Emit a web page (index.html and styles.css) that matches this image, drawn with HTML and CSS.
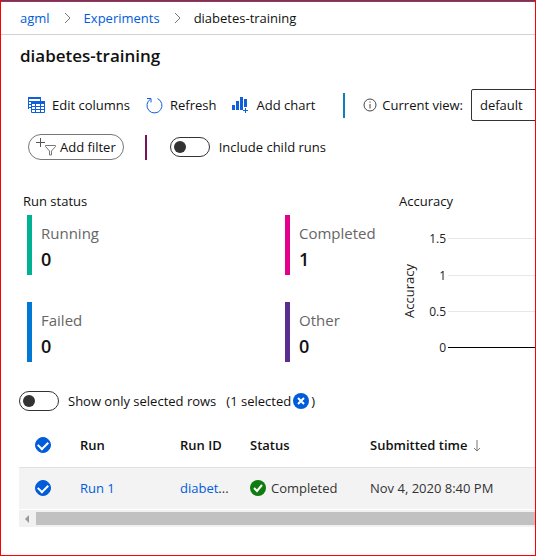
FILE: index.html
```html
<!DOCTYPE html>
<html lang="en">
<head>
<meta charset="utf-8">
<meta name="viewport" content="width=device-width, initial-scale=1">
<title>diabetes-training</title>
<link rel="stylesheet" href="styles.css">
</head>
<body>
<div class="page">
  <nav class="breadcrumb" aria-label="Breadcrumb">
    <a href="#">agml</a>
    <svg class="chevron" viewBox="0 0 7 12" aria-hidden="true"><path d="M1 1l5 5-5 5"/></svg>
    <a href="#">Experiments</a>
    <svg class="chevron" viewBox="0 0 7 12" aria-hidden="true"><path d="M1 1l5 5-5 5"/></svg>
    <span>diabetes-training</span>
  </nav>
  <main>
    <h1>diabetes-training</h1>
    <div class="toolbar">
      <button class="command columns" type="button">
        <svg viewBox="0 0 17 17" aria-hidden="true">
          <path class="fill" d="M0 0h13v2H0zM3 4h14v3H3z"/>
          <path class="line" d="M.5 1v11M0 4.500h3M0 7.500h3M0 10.500h3M12.500 2v2M3.500 6v9.500h13V6M3 9.500h14M3 12.500h14M7.500 7v9M12.500 7v9"/>
        </svg>
        Edit columns
      </button>
      <button class="command refresh" type="button">
        <svg viewBox="0 0 17 17" aria-hidden="true"><path class="line" d="M11.500 1.600A7.500 7.500 0 1 1 4.500 2.100M1 1.500h4v4"/></svg>
        Refresh
      </button>
      <button class="command chart-add" type="button">
        <svg viewBox="0 0 17 17" aria-hidden="true">
          <path class="fill" d="M0 8h3v5H0zM4 4h3v9H4zM8 0h3v13H8zM12 2h3v8h-3z"/>
          <path class="line" d="M13.500 11v5M11 13.500h5"/>
        </svg>
        Add chart
      </button>
      <span class="divider divider-blue"></span>
      <label class="view-label" for="view">
        <svg viewBox="0 0 14 14" aria-hidden="true"><circle cx="7" cy="7" r="6"/><path d="M7 6v4.500M7 3.500v1.200"/></svg>
        Current view:
      </label>
      <select id="view"><option>default</option></select>
    </div>
    <div class="filters">
      <button class="add-filter" type="button">
        <svg viewBox="0 0 21 18" aria-hidden="true"><path class="plus" d="M4.500 0v9M0 4.500h9"/><path class="funnel" d="M9.500 7.500h10v1l-4 4.500v4h-2v-4l-4-4.500z"/></svg>
        Add filter
      </button>
      <span class="divider divider-plum"></span>
      <label class="switch"><input type="checkbox" role="switch">Include child runs</label>
    </div>
    <div class="panels">
      <section class="status">
        <h2>Run status</h2>
        <dl>
          <div class="tile running"><dt>Running</dt><dd>0</dd></div>
          <div class="tile completed"><dt>Completed</dt><dd>1</dd></div>
          <div class="tile failed"><dt>Failed</dt><dd>0</dd></div>
          <div class="tile other"><dt>Other</dt><dd>0</dd></div>
        </dl>
      </section>
      <section class="accuracy">
        <h2>Accuracy</h2>
        <svg class="plot" role="img" aria-label="Accuracy chart">
          <path class="grid" d="M49 27.500h800M49 64.500h800M49 100.500h800"/>
          <path class="axis" d="M49 136.500h800"/>
          <g class="ticks"><text x="47" y="32">1.5</text><text x="47" y="69">1</text><text x="47" y="105">0.5</text><text x="47" y="141">0</text></g>
          <text class="axis-title" transform="translate(15 80) rotate(-90)">Accuracy</text>
        </svg>
      </section>
    </div>
    <div class="selection">
      <label class="switch"><input type="checkbox" role="switch">Show only selected rows</label>
      <span class="count">(1 selected<button class="clear" type="button" aria-label="Clear selection"><svg viewBox="0 0 16 16" aria-hidden="true"><circle cx="8" cy="8" r="8"/><path d="M5 5l6 6M11 5l-6 6"/></svg></button>)</span>
    </div>
    <div class="runs">
      <table>
        <colgroup><col class="c-check"><col class="c-run"><col class="c-id"><col class="c-status"><col></colgroup>
        <thead>
          <tr>
            <th class="check"><input type="checkbox" aria-label="Select all" checked></th>
            <th>Run</th><th>Run ID</th><th>Status</th>
            <th>Submitted time<svg class="sort" viewBox="0 0 8 12" aria-hidden="true"><path d="M4 0v11M1 8l3 3 3-3"/></svg></th>
          </tr>
        </thead>
        <tbody>
          <tr>
            <td class="check"><input type="checkbox" aria-label="Select Run 1" checked></td>
            <td><a href="#">Run 1</a></td>
            <td><a href="#">diabet</a>...</td>
            <td><span class="state"><svg viewBox="0 0 16 16" aria-hidden="true"><circle cx="8" cy="8" r="8"/><path d="M4 8l3 3 5-6"/></svg>Completed</span></td>
            <td>Nov 4, 2020 8:40 PM</td>
          </tr>
        </tbody>
      </table>
      <div class="scrollbar"><svg viewBox="0 0 4 8" aria-hidden="true"><path d="M4 0v8L0 4z"/></svg><span class="thumb"></span></div>
    </div>
  </main>
</div>
</body>
</html>
```
FILE: styles.css
```css
* { box-sizing: border-box; }
body {
  margin: 0;
  font: 13px/20px "Open Sans", "Noto Sans", sans-serif;
  color: #111;
  background: #fff;
}
.page {
  min-height: 100vh;
  border: 1px solid #f00;
  overflow: hidden;
}
a { color: #015cda; text-decoration: none; }
button, select { font: inherit; color: inherit; }
h1, h2, dl, dd { margin: 0; }
svg { flex: none; fill: none; }

.breadcrumb {
  display: flex;
  align-items: center;
  height: 34px;
  padding-left: 19px;
  border-top: 1px solid #1569b4;
  border-bottom: 1px solid #d2d2d2;
  white-space: nowrap;
}
.chevron { width: 7px; height: 12px; margin: 0 13px 0 14px; stroke: #777; }
h1 {
  padding: 8px 19px;
  font-size: 17px;
  line-height: 26px;
  font-weight: 600;
}

.toolbar {
  display: flex;
  align-items: center;
  height: 34px;
  margin-top: 11px;
  padding-left: 27px;
  white-space: nowrap;
}
.command {
  display: flex;
  align-items: center;
  gap: 7px;
  padding: 0;
  margin-right: 16px;
  border: 0;
  background: none;
}
.command svg { width: 17px; height: 17px; }
.command .fill { fill: #1060dc; }
.command .line { stroke: #1060dc; }
.divider { flex: none; width: 2px; height: 25px; }
.divider-blue { margin: 0 18px 0 12px; background: #0e7fb8; }
.divider-plum { margin: 0 23px 0 21px; background: #7a0f5a; }
.view-label { display: flex; align-items: center; gap: 5px; margin-right: 8px; }
.view-label svg { width: 14px; height: 14px; stroke: #444; }
select {
  flex: none;
  width: 160px;
  height: 32px;
  padding: 0 8px;
  border: 1px solid #333;
  border-radius: 2px;
  background: #fff;
  appearance: none;
}

.filters { display: flex; align-items: center; height: 26px; margin-top: 12px; padding-left: 27px; }
.add-filter {
  display: flex;
  align-items: center;
  gap: 3px;
  height: 26px;
  padding: 0 7px;
  border: 1px solid #777;
  border-radius: 13px;
  background: #fff;
  white-space: nowrap;
}
.add-filter svg { width: 21px; height: 18px; }
.plus { stroke: #555; }
.funnel { stroke: #777; }

.switch { display: flex; align-items: center; gap: 9px; }
.switch input {
  flex: none;
  width: 40px;
  height: 20px;
  margin: 0;
  padding: 3px;
  border: 1px solid #333;
  border-radius: 10px;
  appearance: none;
}
.switch input::before {
  content: "";
  display: block;
  width: 12px;
  height: 12px;
  border-radius: 50%;
  background: #333;
}
.switch input:checked::before { margin-left: auto; }

.panels { display: flex; margin-top: 31px; }
.status { flex: none; width: 398px; padding-left: 22px; }
h2 { font-size: 13px; font-weight: 400; line-height: 20px; }
dl {
  display: grid;
  grid-template-columns: 258px 1fr;
  row-gap: 27px;
  margin-top: 4px;
  padding-left: 4px;
}
.tile { height: 60px; padding: 6px 0 0 9px; border-left: 5px solid; }
.tile dt { font-size: 15px; line-height: 24px; color: #666; }
.tile dd { font-size: 18px; line-height: 28px; font-weight: 600; color: #111; }
.running { border-color: #00b294; }
.completed { border-color: #e3008c; }
.failed { border-color: #0078d4; }
.other { border-color: #5c2d91; }
.accuracy { flex: 1; min-width: 0; }
.plot { display: block; width: 100%; height: 150px; }
.grid { stroke: #e8e8e8; }
.axis { stroke: #000; }
.plot text { fill: #222; font-size: 12px; }
.ticks { text-anchor: end; }
.plot .axis-title { text-anchor: middle; font-size: 13px; }

.selection {
  display: flex;
  align-items: center;
  gap: 10px;
  height: 20px;
  margin-top: 29px;
  padding-left: 18px;
  white-space: nowrap;
}
.count { display: flex; align-items: center; }
.clear { width: 16px; height: 16px; margin: 0 2px; padding: 0; border: 0; background: none; }
.clear svg { display: block; fill: #015cda; }
.clear path { stroke: #fff; stroke-width: 2; }

.runs { margin: 13px 0 28px 18px; overflow: hidden; }
table { width: 100%; border-collapse: collapse; table-layout: fixed; }
.c-check { width: 53px; }
.c-run { width: 100px; }
.c-id { width: 70px; }
.c-status { width: 120px; }
th, td { padding: 0 0 0 8px; text-align: left; white-space: nowrap; }
th { height: 43px; font-weight: 600; border-bottom: 1px solid #e1e1e1; }
td { height: 42px; color: #333; background: #f3f3f3; }
.check input {
  display: grid;
  place-items: center;
  width: 16px;
  height: 16px;
  margin: 0 0 0 8px;
  border: 1px solid #015cda;
  border-radius: 50%;
  appearance: none;
}
.check input:checked { background: #015cda; }
.check input:checked::before {
  content: "";
  width: 8px;
  height: 5px;
  margin-bottom: 2px;
  border: solid #fff;
  border-width: 0 0 2px 2px;
  transform: rotate(-45deg);
}
.sort { width: 8px; height: 12px; margin-left: 6px; vertical-align: -2px; stroke: #777; }
.state { display: flex; align-items: center; gap: 5px; }
.state svg { width: 16px; height: 16px; fill: #107c10; }
.state path { fill: none; stroke: #fff; stroke-width: 2; }
.scrollbar {
  display: flex;
  align-items: center;
  height: 17px;
  margin-top: 1px;
  padding-left: 6px;
  background: #f1f1f1;
}
.scrollbar svg { width: 4px; height: 8px; margin-right: 7px; fill: #999; }
.thumb { flex: 1; height: 13px; background: #c1c1c1; }
```
